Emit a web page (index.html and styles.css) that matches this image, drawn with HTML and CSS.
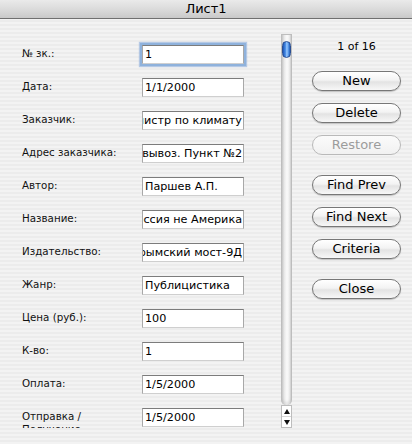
FILE: index.html
```html
<!DOCTYPE html>
<html>
<head>
<meta charset="utf-8">
<link rel="stylesheet" href="styles.css">
</head>
<body>
<div class="window">
  <div class="titlebar">Лист1</div>
  <div class="content">
    <div class="form">
      <div class="row"><div class="label">№ зк.:</div><div class="field focused"><span>1</span></div></div>
      <div class="row"><div class="label">Дата:</div><div class="field"><span>1/1/2000</span></div></div>
      <div class="row"><div class="label">Заказчик:</div><div class="field over"><span>Министр по климату</span></div></div>
      <div class="row"><div class="label">Адрес заказчика:</div><div class="field over"><span>Самовывоз. Пункт №2</span></div></div>
      <div class="row"><div class="label">Автор:</div><div class="field"><span>Паршев А.П.</span></div></div>
      <div class="row"><div class="label">Название:</div><div class="field over"><span>Почему Россия не Америка</span></div></div>
      <div class="row"><div class="label">Издательство:</div><div class="field over"><span>Крымский мост-9Д</span></div></div>
      <div class="row"><div class="label">Жанр:</div><div class="field"><span>Публицистика</span></div></div>
      <div class="row"><div class="label">Цена (руб.):</div><div class="field"><span>100</span></div></div>
      <div class="row"><div class="label">К-во:</div><div class="field"><span>1</span></div></div>
      <div class="row"><div class="label">Оплата:</div><div class="field"><span>1/5/2000</span></div></div>
      <div class="row"><div class="label">Отправка / Получение:</div><div class="field"><span>1/5/2000</span></div></div>
    </div>
    <div class="scrollbar">
      <div class="track"><div class="thumb"></div></div>
      <div class="arrows">
        <div class="arrow up"></div>
        <div class="arrow down"></div>
      </div>
    </div>
    <div class="side">
      <div class="count">1 of 16</div>
      <div class="group">
        <div class="btn">New</div>
        <div class="btn">Delete</div>
        <div class="btn disabled">Restore</div>
      </div>
      <div class="group">
        <div class="btn">Find Prev</div>
        <div class="btn">Find Next</div>
        <div class="btn">Criteria</div>
      </div>
      <div class="group">
        <div class="btn">Close</div>
      </div>
    </div>
  </div>
</div>
</body>
</html>
```

FILE: styles.css
```css
* { box-sizing: border-box; }
html, body { margin: 0; padding: 0; }
body {
  font-family: "DejaVu Sans", "Liberation Sans", sans-serif;
  color: #000;
}
.window {
  width: 412px;
  height: 444px;
  overflow: hidden;
  background: repeating-linear-gradient(to bottom, #ececec 0, #ececec 2px, #f3f3f3 2px, #f3f3f3 4px);
}
.titlebar {
  height: 19px;
  border-bottom: 1px solid #707070;
  background: linear-gradient(to bottom, #eaeaea, #d8d8d8 60%, #c9c9c9);
  text-align: center;
  font-size: 13px;
  line-height: 18px;
}
.content {
  display: flex;
  height: 409px;
}
.form {
  width: 281px;
  height: 409px;
  overflow: hidden;
  padding: 26px 0 0 22px;
  display: flex;
  flex-direction: column;
  gap: 14px;
}
.row {
  display: grid;
  grid-template-columns: 120px 102px;
  height: 19px;
  flex: none;
}
.label {
  font-size: 10.3px;
  line-height: 13px;
  padding-top: 2px;
  padding-right: 8px;
  color: #111;
}
.field {
  height: 19px;
  background: #fff;
  border: 1px solid #a8a8a8;
  border-top-color: #7c7c7c;
  border-bottom-color: #cfcfcf;
  font-size: 11.2px;
  line-height: 17px;
  padding: 0 2px;
  overflow: hidden;
  white-space: nowrap;
  display: flex;
}
.field.over {
  justify-content: flex-end;
  padding: 0 1px 0 0;
}
.field span { flex: none; }
.field.focused {
  box-shadow: 0 0 0 2px #8fb2dc, 0 0 1px 3px rgba(120,160,215,.5);
}
.scrollbar {
  width: 11px;
  margin-top: 15px;
  height: 394px;
  display: flex;
  flex-direction: column;
}
.track {
  flex: 1;
  position: relative;
  border: 1px solid #bdbdbd;
  border-bottom: none;
  border-radius: 0 0 5px 5px;
  background: linear-gradient(to right, #cdcdcd, #ececec 30%, #fafafa 55%, #eeeeee 80%, #d4d4d4);
  box-shadow: inset 0 -3px 3px rgba(0,0,0,.08);
}
.thumb {
  position: absolute;
  left: 0;
  top: 6px;
  width: 9px;
  height: 17px;
  border-radius: 5px;
  border: 1px solid #2a4f93;
  background: linear-gradient(to right, #1d55b5, #4a8ee6 35%, #9ccaff 55%, #4d8fe2 80%, #2258b0);
}
.arrows {
  height: 23px;
  border: 1px solid #bdbdbd;
  background: #fff;
  display: flex;
  flex-direction: column;
}
.arrow {
  flex: 1;
  display: flex;
  align-items: center;
  justify-content: center;
}
.arrow.up { border-bottom: 1px solid #d6d6d6; }
.arrow::after {
  content: "";
  width: 0;
  height: 0;
  border-left: 3px solid transparent;
  border-right: 3px solid transparent;
}
.arrow.up::after { border-bottom: 5px solid #111; }
.arrow.down::after { border-top: 5px solid #111; }
.side {
  width: 89px;
  margin-left: 20px;
  padding-top: 21px;
  display: flex;
  flex-direction: column;
}
.count {
  font-size: 11px;
  line-height: 13px;
  text-align: center;
  margin-bottom: 18px;
}
.group {
  display: flex;
  flex-direction: column;
  gap: 12px;
  margin-bottom: 20px;
}
.btn {
  height: 20px;
  border: 1px solid #777;
  border-radius: 10px;
  background: linear-gradient(to bottom, #ffffff 0%, #f3f3f3 45%, #e3e3e3 55%, #f7f7f7 100%);
  box-shadow: 0 1px 1px rgba(0,0,0,.2);
  font-size: 13px;
  line-height: 18px;
  text-align: center;
}
.btn.disabled {
  border-color: #b9b9b9;
  color: #9c9c9c;
  box-shadow: none;
  background: linear-gradient(to bottom, #fbfbfb, #f1f1f1);
}
```
